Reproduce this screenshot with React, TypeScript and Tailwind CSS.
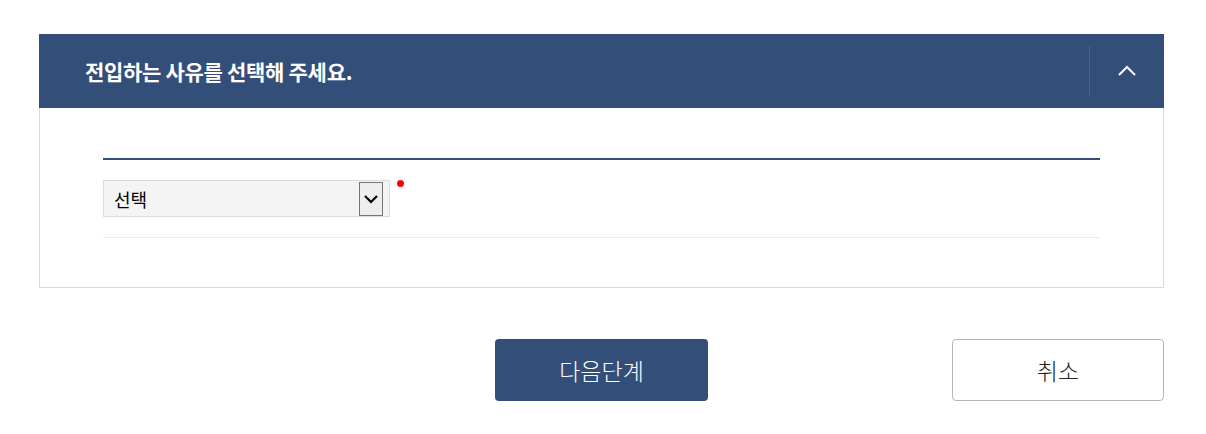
import React from "react";

export default function App() {
  const font = { fontFamily: '"Noto Sans CJK KR", "Noto Sans", sans-serif' };
  return (
    <div className="w-[1206px] h-[434px] bg-white" style={font}>
      <div className="pt-[34px] px-[39px] w-[1203px]">
        <div className="h-[74px] bg-[#344e7a] flex items-center">
          <div className="flex-1 pl-[46px] text-white text-[21px] font-bold tracking-[-0.3px] leading-none">
            전입하는 사유를 선택해 주세요.
          </div>
          <div className="w-px h-[50px] bg-[#4a6390]" />
          <div className="w-[74px] flex items-center justify-center">
            <svg width="20" height="12" viewBox="0 0 20 12">
              <path d="M2 10 L10 2 L18 10" stroke="white" strokeWidth="2" fill="none" />
            </svg>
          </div>
        </div>
        <div className="h-[180px] border border-t-0 border-[#d9d9d9] px-[63px] pt-[50px]">
          <div className="h-[2px] bg-[#344e7a]" />
          <div className="flex pt-[20px] pb-[20px] border-b border-[#eaeaea]">
            <div className="w-[287px] h-[37px] bg-[#f4f4f4] border border-[#dcdcdc] flex items-center justify-between pl-[10px] pr-[6px]">
              <span className="text-[18px] text-black leading-none">선택</span>
              <div className="w-[24px] h-[34px] border border-[#777] bg-[#eeeeee] flex items-center justify-center">
                <svg width="16" height="10" viewBox="0 0 16 10">
                  <path d="M2 2 L8 8 L14 2" stroke="black" strokeWidth="2.2" fill="none" />
                </svg>
              </div>
            </div>
            <div className="ml-[7px] mt-[0px] w-[7px] h-[7px] rounded-full bg-[#f00]" />
          </div>
        </div>
        <div className="flex mt-[51px] h-[62px]">
          <div className="ml-[456px] w-[213px] h-[62px] rounded-[4px] bg-[#344e7a] text-white text-[23px] font-light flex items-center justify-center">
            다음단계
          </div>
          <div className="ml-[244px] w-[212px] h-[62px] rounded-[4px] border border-[#b5b5b5] bg-white text-[#222] text-[23px] font-light flex items-center justify-center">
            취소
          </div>
        </div>
      </div>
    </div>
  );
}
